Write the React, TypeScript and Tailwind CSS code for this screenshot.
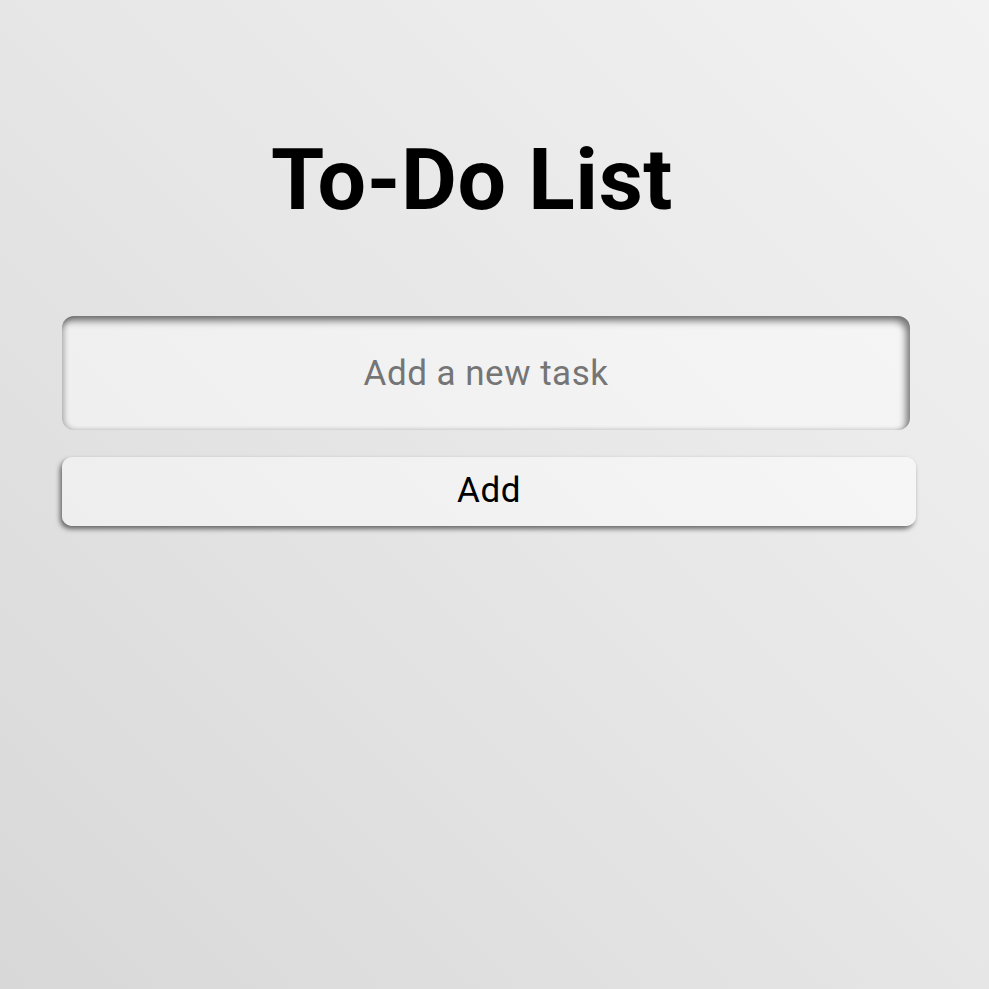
export default function App() {
  return (
    <div
      className="min-h-[989px] w-full bg-[linear-gradient(45deg,#d8d8d8_0%,#e6e6e6_50%,#f2f2f2_100%)] font-['Roboto',sans-serif]"
    >
      <div className="flex flex-col px-[62px] pt-[130px]">
        <h1 className="pr-[45px] text-center text-[86px] font-bold leading-[100px] tracking-[0.5px] text-black">
          To-Do List
        </h1>
        <input
          type="text"
          placeholder="Add a new task"
          className="mt-[86px] h-[114px] w-[848px] rounded-[12px] bg-[linear-gradient(45deg,#efefef,#f5f5f5)] text-center text-[35px] tracking-[0.5px] text-black shadow-[inset_-4px_5px_7px_rgba(0,0,0,0.5),inset_3px_0px_5px_rgba(0,0,0,0.2)] outline-none placeholder:text-[#757575]"
        />
        <button className="mt-[27px] h-[69px] w-[854px] rounded-[10px] bg-[linear-gradient(45deg,#eeeeee,#f6f6f6)] text-[35px] tracking-[0.5px] text-black shadow-[-2px_3px_5px_rgba(0,0,0,0.55)]">
          Add
        </button>
      </div>
    </div>
  );
}
